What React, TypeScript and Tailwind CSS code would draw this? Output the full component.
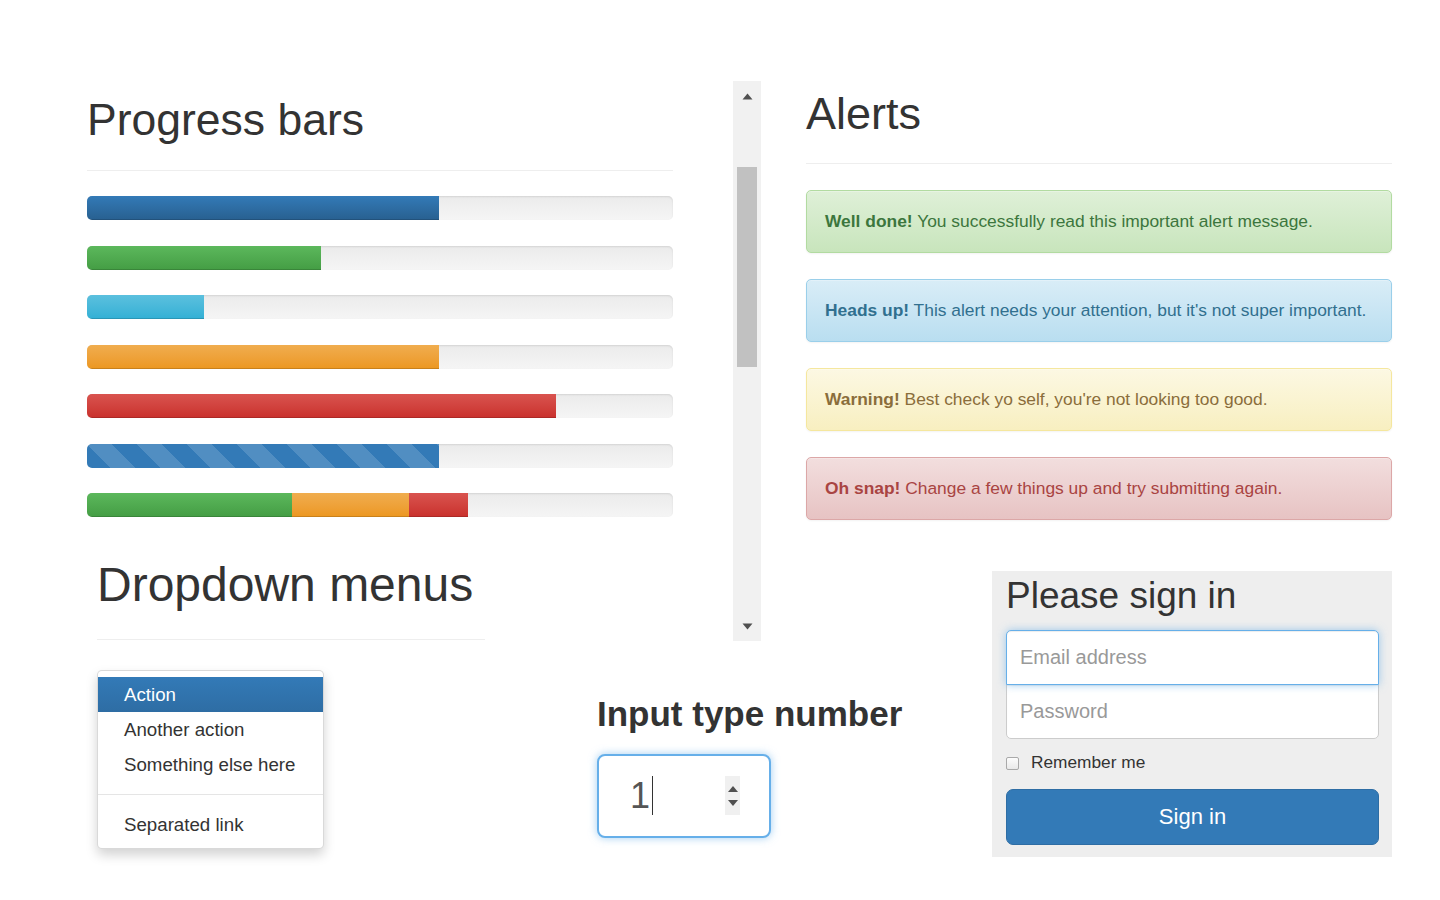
const bars = [
  { width: 60, fill: "bg-linear-to-b from-[#337ab7] to-[#286090]" },
  { width: 40, fill: "bg-linear-to-b from-[#5cb85c] to-[#449d44]" },
  { width: 20, fill: "bg-linear-to-b from-[#5bc0de] to-[#31b0d5]" },
  { width: 60, fill: "bg-linear-to-b from-[#f0ad4e] to-[#ec971f]" },
  { width: 80, fill: "bg-linear-to-b from-[#d9534f] to-[#c9302c]" },
];

const stacked = [
  { width: 35, fill: "bg-linear-to-b from-[#5cb85c] to-[#449d44]" },
  { width: 20, fill: "bg-linear-to-b from-[#f0ad4e] to-[#ec971f]" },
  { width: 10, fill: "bg-linear-to-b from-[#d9534f] to-[#c9302c]" },
];

const alerts = [
  {
    strong: "Well done!",
    text: "You successfully read this important alert message.",
    cls: "bg-linear-to-b from-[#dff0d8] to-[#c8e5bc] border-[#b2dba1] text-[#3c763d]",
  },
  {
    strong: "Heads up!",
    text: "This alert needs your attention, but it's not super important.",
    cls: "bg-linear-to-b from-[#d9edf7] to-[#b9def0] border-[#9acfea] text-[#31708f]",
  },
  {
    strong: "Warning!",
    text: "Best check yo self, you're not looking too good.",
    cls: "bg-linear-to-b from-[#fcf8e3] to-[#f8efc0] border-[#f5e79e] text-[#8a6d3b]",
  },
  {
    strong: "Oh snap!",
    text: "Change a few things up and try submitting again.",
    cls: "bg-linear-to-b from-[#f2dede] to-[#e7c3c3] border-[#dca7a7] text-[#a94442]",
  },
];

function Track({ children }: { children: React.ReactNode }) {
  return (
    <div className="flex h-[24px] overflow-hidden rounded-[5px] bg-linear-to-b from-[#ebebeb] to-[#f5f5f5] shadow-[inset_0_1px_2px_rgba(0,0,0,0.1)]">
      {children}
    </div>
  );
}

function ProgressSection() {
  return (
    <section className="mt-[14px] w-[586px] shrink-0">
      <h1 className="border-b border-[#eee] pb-[25px] text-[44.5px] leading-[49.5px]">Progress bars</h1>
      <div className="mt-[25.5px] flex flex-col gap-[25.5px]">
        {bars.map((b, i) => (
          <Track key={i}>
            <div
              className={`h-full ${b.fill} shadow-[inset_0_-1px_0_rgba(0,0,0,0.15)]`}
              style={{ width: `${b.width}%` }}
            />
          </Track>
        ))}
        <Track>
          <div
            className="h-full bg-[#337ab7] bg-[linear-gradient(45deg,rgba(255,255,255,0.15)_25%,transparent_25%,transparent_50%,rgba(255,255,255,0.15)_50%,rgba(255,255,255,0.15)_75%,transparent_75%,transparent)] bg-[length:50px_50px]"
            style={{ width: "60%" }}
          />
        </Track>
        <Track>
          {stacked.map((s, i) => (
            <div
              key={i}
              className={`h-full ${s.fill} shadow-[inset_0_-1px_0_rgba(0,0,0,0.15)]`}
              style={{ width: `${s.width}%` }}
            />
          ))}
        </Track>
      </div>
    </section>
  );
}

function Scrollbar() {
  return (
    <div className="ml-[60px] -mb-[130px] flex h-[560px] w-[28px] shrink-0 flex-col items-center bg-[#f1f1f1] pt-[12px] pb-[11px]">
      <svg width="11" height="7" viewBox="0 0 11 7">
        <path d="M5.5 0.5 L10.5 6.5 L0.5 6.5 Z" fill="#505050" />
      </svg>
      <div className="mt-[67px] h-[200px] w-[20px] bg-[#c1c1c1]" />
      <div className="flex-1" />
      <svg width="11" height="7" viewBox="0 0 11 7">
        <path d="M0.5 0.5 L10.5 0.5 L5.5 6.5 Z" fill="#505050" />
      </svg>
    </div>
  );
}

function AlertsSection() {
  return (
    <section className="ml-[45px] mt-[8px] w-[586px] shrink-0">
      <h1 className="border-b border-[#eee] pb-[24.5px] text-[45px] leading-[1.1]">Alerts</h1>
      <div className="mt-[26px] flex flex-col gap-[26px]">
        {alerts.map((a) => (
          <div
            key={a.strong}
            className={`rounded-[5px] border px-[18px] py-[18px] text-[17.4px] leading-[25px] shadow-[inset_0_1px_0_rgba(255,255,255,0.25),0_1px_2px_rgba(0,0,0,0.05)] ${a.cls}`}
          >
            <strong className="font-bold">{a.strong}</strong> {a.text}
          </div>
        ))}
      </div>
    </section>
  );
}

function DropdownSection() {
  return (
    <section className="ml-[10px] mt-[39.4px] w-[388px] shrink-0">
      <h1 className="border-b border-[#eee] pb-[26.8px] text-[48px] leading-[52.8px]">Dropdown menus</h1>
      <ul className="mt-[30px] w-[227px] rounded-[5px] border border-[rgba(0,0,0,0.15)] bg-white py-[6px] text-[18.7px] shadow-[0_6px_12px_rgba(0,0,0,0.175)]">
        <li className="h-[35px] bg-linear-to-b from-[#337ab7] to-[#2e6da4] px-[26px] leading-[35px] text-white">Action</li>
        <li className="h-[35px] px-[26px] leading-[35px]">Another action</li>
        <li className="h-[35px] px-[26px] leading-[35px]">Something else here</li>
        <li className="my-[12px] h-px bg-[#e5e5e5]" />
        <li className="h-[35px] px-[26px] leading-[35px]">Separated link</li>
      </ul>
    </section>
  );
}

function NumberSection() {
  return (
    <section className="ml-[112px] mt-[175px] w-[305px] shrink-0">
      <h3 className="whitespace-nowrap text-[35px] font-bold leading-[1.1]">Input type number</h3>
      <div className="mt-[20px] flex h-[84px] w-[174px] items-center rounded-[8px] border-2 border-[#66afe9] bg-white pl-[31px] pr-[29px] shadow-[0_0_8px_rgba(102,175,233,0.6)]">
        <span className="text-[36px] leading-none text-[#555]">1</span>
        <span className="ml-[2px] h-[39px] w-px bg-[#333]" />
        <div className="ml-auto flex h-[39px] w-[15px] flex-col items-center justify-center gap-[8px] bg-[#f0f0f0]">
          <svg width="10" height="6" viewBox="0 0 10 6">
            <path d="M5 0 L10 6 L0 6 Z" fill="#505050" />
          </svg>
          <svg width="10" height="6" viewBox="0 0 10 6">
            <path d="M0 0 L10 0 L5 6 Z" fill="#505050" />
          </svg>
        </div>
      </div>
    </section>
  );
}

function SignIn() {
  return (
    <form className="ml-[90px] mt-[51px] w-[400px] shrink-0 bg-[#eee] pt-[5px] pb-[12px] pl-[14px] pr-[13px]">
      <h2 className="mb-[13px] text-[37px] leading-[1.1]">Please sign in</h2>
      <input
        readOnly
        placeholder="Email address"
        className="relative z-10 block h-[55px] w-full rounded-t-[5px] border border-[#66afe9] bg-white px-[13px] text-[20px] text-[#555] shadow-[inset_0_1px_1px_rgba(0,0,0,0.075),0_0_8px_rgba(102,175,233,0.6)] outline-none placeholder:text-[#999]"
      />
      <input
        readOnly
        placeholder="Password"
        className="-mt-px block h-[55px] w-full rounded-b-[5px] border border-[#ccc] bg-white px-[13px] text-[20px] text-[#555] shadow-[inset_0_1px_1px_rgba(0,0,0,0.075)] outline-none placeholder:text-[#999]"
      />
      <label className="mt-[12px] flex h-[25px] items-center text-[17.3px]">
        <span className="h-[13px] w-[13px] rounded-[2px] border border-[#a9a9a9] bg-linear-to-b from-[#fcfcfc] to-[#e9e9e9]" />
        <span className="ml-[12px]">Remember me</span>
      </label>
      <button
        type="button"
        className="mt-[13px] block h-[56px] w-full rounded-[7px] border border-[#2e6da4] bg-[#337ab7] text-[22px] text-white"
      >
        Sign in
      </button>
    </form>
  );
}

export default function App() {
  return (
    <div className="min-h-[900px] bg-white pt-[81px] pl-[87px] font-['Liberation_Sans',Arial,sans-serif] text-[#333]">
      <div className="flex items-start">
        <ProgressSection />
        <Scrollbar />
        <AlertsSection />
      </div>
      <div className="flex items-start">
        <DropdownSection />
        <NumberSection />
        <SignIn />
      </div>
    </div>
  );
}
